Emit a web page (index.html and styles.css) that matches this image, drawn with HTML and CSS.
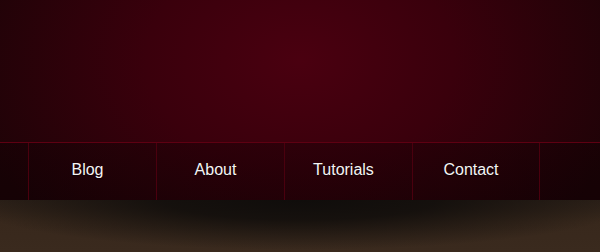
FILE: index.html
```html
<!DOCTYPE html>
<html lang="en">
<head>
    <meta charset="UTF-8">
    <meta name="viewport" content="width=device-width, initial-scale=1.0">
    <title>Menu</title>
    <link rel="stylesheet" href="styles.css">
</head>
<body>
    <div class="top">
        <header class="banner"></header>
        <nav class="menu">
            <ul>
                <li><a href="#">Blog</a></li>
                <li><a href="#">About</a></li>
                <li><a href="#">Tutorials</a></li>
                <li><a href="#">Contact</a></li>
            </ul>
        </nav>
    </div>
    <section class="content"></section>
</body>
</html>
```

FILE: styles.css
```css
* {
    padding: 0;
    margin: 0;
    box-sizing: border-box;
}

html, body {
    height: 100%;
}

body {
    display: flex;
    flex-direction: column;
    font-family: "Liberation Sans", Arial, sans-serif;
    background: #382819;
}

.top {
    height: 200px;
    background: radial-gradient(ellipse 340px 240px at 300px 60px, #4a0010 0%, #3a000c 45%, #1e0307 100%);
}

.banner {
    height: 142px;
}

.menu {
    height: 58px;
    border-top: 1px solid #5e0012;
    background: linear-gradient(to bottom, rgba(10,0,2,.3), rgba(10,0,2,.42));
}

.menu ul {
    list-style: none;
    display: flex;
    height: 100%;
    padding-left: 28px;
}

.menu li {
    width: 128px;
    border-left: 1px solid #4a000e;
    display: flex;
    align-items: center;
    justify-content: center;
    padding: 0 10px 4px 0;
}

.menu li:last-child {
    border-right: 1px solid #4a000e;
}

.menu a {
    color: #f4f4f4;
    text-decoration: none;
    font-size: 16px;
    text-shadow: 0 1px 1px rgba(0,0,0,.5);
}

.content {
    flex: 1;
    background:
        radial-gradient(ellipse 340px 50px at 300px 0, #100d0b 0%, rgba(16,13,11,.85) 40%, rgba(16,13,11,0) 100%),
        linear-gradient(to bottom, #2e2219, #38281c 40%, #3a2a1e);
}
```
